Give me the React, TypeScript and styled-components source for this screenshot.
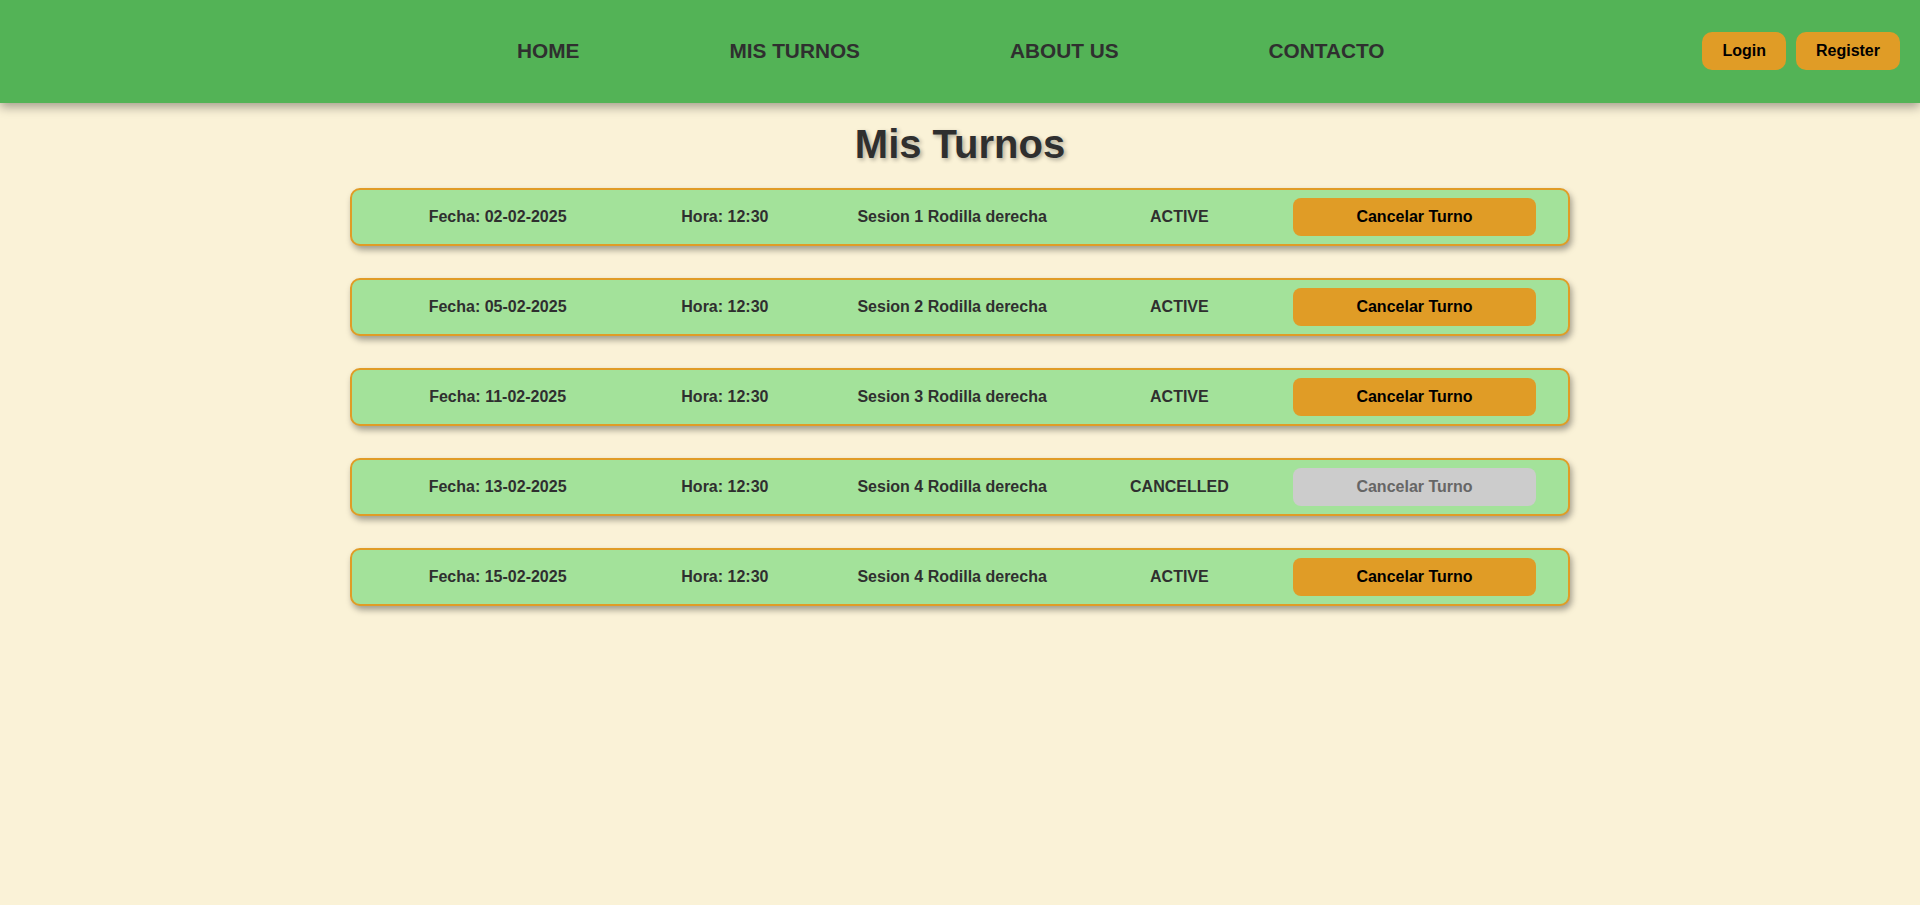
import React from "react";
import styled, { createGlobalStyle } from "styled-components";

const GlobalStyle = createGlobalStyle`
  html, body {
    margin: 0;
    padding: 0;
    background: #faf2d7;
    font-family: "Liberation Sans", Arial, sans-serif;
  }
  * { box-sizing: border-box; }
`;

const Page = styled.div`
  min-height: 905px;
  background: #faf2d7;
`;

const Header = styled.header`
  position: relative;
  z-index: 1;
  height: 103px;
  display: flex;
  align-items: center;
  padding: 0 20px 2px 442px;
  background: #53b356;
  box-shadow: 0 4px 10px rgba(0, 0, 0, 0.35);
`;

const Nav = styled.nav`
  display: flex;
  align-items: center;
`;

const NavLink = styled.a`
  padding: 0 75px;
  font-size: 20.8px;
  font-weight: 700;
  color: #2f2f2f;
  text-decoration: none;
  cursor: pointer;
`;

const AuthGroup = styled.div`
  margin-left: auto;
  display: flex;
  gap: 10px;
`;

const AuthButton = styled.button`
  height: 38px;
  padding: 0 20px;
  border: none;
  border-radius: 10px;
  background: #e09c26;
  color: #000;
  font-family: "Liberation Sans", Arial, sans-serif;
  font-size: 16px;
  font-weight: 700;
  cursor: pointer;
`;

const Main = styled.main`
  display: flex;
  flex-direction: column;
  align-items: center;
`;

const Title = styled.h1`
  margin: 18px 0 21px;
  font-size: 40px;
  line-height: 46px;
  font-weight: 700;
  color: #2f2f2f;
  text-shadow: 2px 2px 4px rgba(0, 0, 0, 0.3);
`;

const List = styled.ul`
  list-style: none;
  margin: 0;
  padding: 0;
  width: 1220px;
  display: flex;
  flex-direction: column;
  gap: 32px;
`;

const Card = styled.li`
  display: grid;
  grid-template-columns: repeat(4, 1fr) 243px;
  align-items: center;
  padding: 8px 32px;
  background: #a3e29a;
  border: 2px solid #e09c26;
  border-radius: 10px;
  box-shadow: 2px 4px 6px rgba(0, 0, 0, 0.35);
`;

const Cell = styled.span`
  text-align: center;
  font-size: 16px;
  font-weight: 700;
  color: #2f2f2f;
`;

const CancelButton = styled.button<{ $disabled?: boolean }>`
  height: 38px;
  width: 100%;
  border: none;
  border-radius: 8px;
  background: ${(p) => (p.$disabled ? "#cccccc" : "#e09c26")};
  color: ${(p) => (p.$disabled ? "#666666" : "#000000")};
  font-family: "Liberation Sans", Arial, sans-serif;
  font-size: 16px;
  font-weight: 700;
  cursor: ${(p) => (p.$disabled ? "not-allowed" : "pointer")};
`;

const turnos = [
  { fecha: "02-02-2025", hora: "12:30", desc: "Sesion 1 Rodilla derecha", status: "ACTIVE" },
  { fecha: "05-02-2025", hora: "12:30", desc: "Sesion 2 Rodilla derecha", status: "ACTIVE" },
  { fecha: "11-02-2025", hora: "12:30", desc: "Sesion 3 Rodilla derecha", status: "ACTIVE" },
  { fecha: "13-02-2025", hora: "12:30", desc: "Sesion 4 Rodilla derecha", status: "CANCELLED" },
  { fecha: "15-02-2025", hora: "12:30", desc: "Sesion 4 Rodilla derecha", status: "ACTIVE" },
];

export default function App() {
  return (
    <Page>
      <GlobalStyle />
      <Header>
        <Nav>
          <NavLink>HOME</NavLink>
          <NavLink>MIS TURNOS</NavLink>
          <NavLink>ABOUT US</NavLink>
          <NavLink>CONTACTO</NavLink>
        </Nav>
        <AuthGroup>
          <AuthButton>Login</AuthButton>
          <AuthButton>Register</AuthButton>
        </AuthGroup>
      </Header>
      <Main>
        <Title>Mis Turnos</Title>
        <List>
          {turnos.map((t, i) => {
            const cancelled = t.status === "CANCELLED";
            return (
              <Card key={i}>
                <Cell>Fecha: {t.fecha}</Cell>
                <Cell>Hora: {t.hora}</Cell>
                <Cell>{t.desc}</Cell>
                <Cell>{t.status}</Cell>
                <CancelButton $disabled={cancelled} disabled={cancelled}>
                  Cancelar Turno
                </CancelButton>
              </Card>
            );
          })}
        </List>
      </Main>
    </Page>
  );
}
